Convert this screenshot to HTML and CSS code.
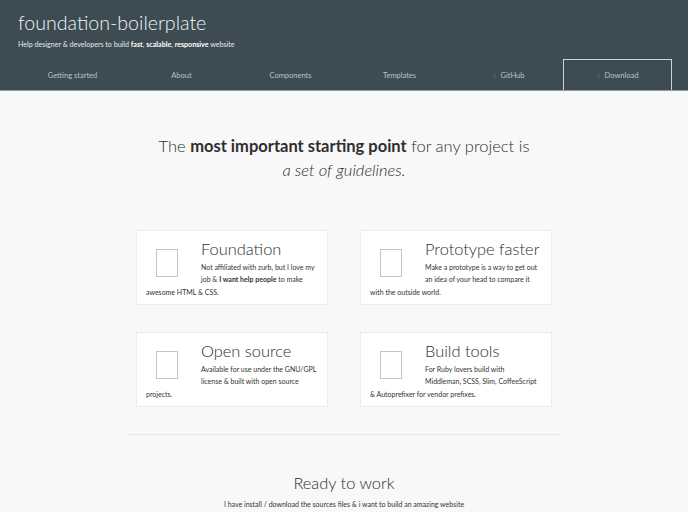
FILE: index.html
```html
<!DOCTYPE html>
<html>
<head>
<meta charset="utf-8">
<link rel="stylesheet" href="styles.css">
</head>
<body>
<header class="header">
  <h1 class="title">foundation-boilerplate</h1>
  <p class="tagline">Help designer &amp; developers to build <b>fast</b>, <b>scalable</b>, <b>responsive</b> website</p>
  <nav class="nav">
    <a class="nav-item">Getting started</a>
    <a class="nav-item">About</a>
    <a class="nav-item">Components</a>
    <a class="nav-item">Templates</a>
    <a class="nav-item"><span class="ico"></span>GitHub</a>
    <a class="nav-item nav-active"><span class="ico"></span>Download</a>
  </nav>
</header>
<main class="main">
  <h2 class="lead">The <b>most important starting point</b> for any project is<br><i>a set of guidelines.</i></h2>
  <div class="cards">
    <div class="card">
      <div class="card-icon"></div>
      <h3 class="card-title">Foundation</h3>
      <p class="card-text">Not affiliated with zurb, but I love my job &amp; <b>I want help people</b> to make awesome HTML &amp; CSS.</p>
    </div>
    <div class="card">
      <div class="card-icon"></div>
      <h3 class="card-title">Prototype faster</h3>
      <p class="card-text">Make a prototype is a way to get out an idea of your head to compare it with the outside world.</p>
    </div>
    <div class="card">
      <div class="card-icon"></div>
      <h3 class="card-title">Open source</h3>
      <p class="card-text">Available for use under the GNU/GPL license &amp; built with open source projects.</p>
    </div>
    <div class="card">
      <div class="card-icon"></div>
      <h3 class="card-title">Build tools</h3>
      <p class="card-text">For Ruby lovers build with Middleman, SCSS, Slim, CoffeeScript &amp; Autoprefixer for vendor prefixes.</p>
    </div>
  </div>
  <hr class="divider">
  <h2 class="ready">Ready to work</h2>
  <p class="ready-text">I have install / download the sources files &amp; i want to build an amazing website</p>
</main>
</body>
</html>
```
FILE: styles.css
```css
* { box-sizing: border-box; }
html, body { margin: 0; padding: 0; }
body {
  font-family: Lato, "Open Sans", sans-serif;
  background: #f8f8f8;
  color: #333;
}
.header {
  background: #3d4b53;
  padding: 12px 16px 0 18px;
  height: 91px;
  border-bottom: 1px solid #8f999f;
}
.title {
  margin: 0;
  font-weight: 300;
  font-size: 19.6px;
  line-height: 22px;
  color: #f2f4f5;
}
.tagline {
  margin: 6px 0 0;
  font-size: 7.1px;
  line-height: 10px;
  color: #e6eaec;
}
.tagline b { color: #fff; font-weight: 700; }
.nav {
  display: grid;
  grid-template-columns: repeat(6, 1fr);
  margin-top: 9px;
}
.nav-item {
  height: 31px;
  display: flex;
  align-items: center;
  justify-content: center;
  font-size: 7.5px;
  color: #b9c2c7;
  border: 1.5px solid transparent;
  border-bottom: 0;
}
.nav-active {
  border-color: #c9d2d8;
}
.ico {
  display: inline-block;
  width: 3px;
  height: 5px;
  border-left: 1px solid #4e5c64;
  border-right: 1px solid #4e5c64;
  margin-right: 5px;
}
.main {
  width: 432px;
  margin: 0 auto;
}
.lead {
  margin: 43px 0 0;
  text-align: center;
  font-weight: 300;
  font-size: 16.5px;
  line-height: 24px;
  color: #2e2e2e;
}
.lead b { font-weight: 700; }
.lead i { font-weight: 300; }
.cards {
  display: grid;
  grid-template-columns: 1fr 1fr;
  column-gap: 32px;
  row-gap: 27px;
  padding: 0 8px;
  margin-top: 48px;
}
.card {
  background: #fff;
  border: 1px solid #ececec;
  height: 75px;
  padding: 8px 10px 0 9px;
  overflow: hidden;
}
.card-icon {
  float: left;
  width: 22px;
  height: 28px;
  border: 1px solid #c4c4c4;
  margin: 10px 23px 0 10px;
}
.card-title {
  margin: 0;
  font-weight: 300;
  font-size: 16.4px;
  line-height: 20px;
  color: #2e2e2e;
}
.card-text {
  margin: 1.5px 0 0;
  font-size: 7px;
  line-height: 12.5px;
  color: #333;
}
.card-text b { font-weight: 700; }
.divider {
  border: 0;
  border-top: 1px solid #e6e6e6;
  margin: 27px 0 0;
}
.ready {
  margin: 37px 0 0;
  text-align: center;
  font-weight: 300;
  font-size: 16.4px;
  line-height: 22px;
  color: #2e2e2e;
}
.ready-text {
  text-align: center;
  margin: 5px 0 0;
  font-size: 7px;
  line-height: 10px;
  color: #333;
}
```
